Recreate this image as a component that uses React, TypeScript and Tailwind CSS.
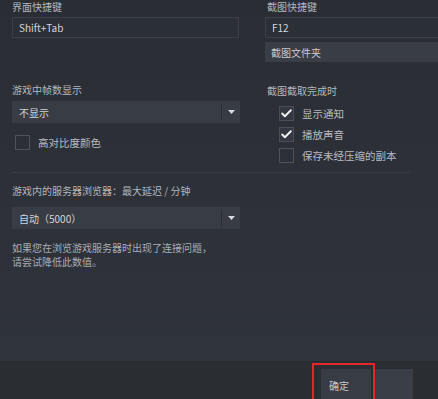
import {Check} from "lucide-react";

const font = {fontFamily: '"Noto Sans CJK SC", "Liberation Sans", sans-serif'};

const Label = ({children, className = ''}: {children: React.ReactNode; className?: string}) => (
    <div className={`text-[10px] leading-[14px] text-[#b3b7be] ${className}`}>{children}</div>
);

const Field = ({children, className = ''}: {children: React.ReactNode; className?: string}) => (
    <div className={`h-[21px] flex items-center px-[6px] text-[10px] text-[#d4d6da] bg-[#2b2f36] border border-[#3b3f47] ${className}`}>
        {children}
    </div>
);

const DropDown = ({value, className = ''}: {value: string; className?: string}) => (
    <div className={`h-[22px] w-[228px] flex items-stretch bg-[#383c44] text-[10px] text-[#d4d6da] ${className}`}>
        <div className="flex-1 flex items-center px-[7px]">{value}</div>
        <div className="w-[1px] my-[3px] bg-[#2a2d33]"/>
        <div className="w-[18px] flex items-center justify-center">
            <svg width="7" height="4" viewBox="0 0 7 4"><path d="M0 0h7L3.5 4z" fill="#d8dadd"/></svg>
        </div>
    </div>
);

const CheckBox = ({checked, label}: {checked?: boolean; label: string}) => (
    <div className="flex items-center h-[15px]">
        <div className={`w-[15px] h-[15px] flex items-center justify-center border ${checked ? 'bg-[#33373f] border-[#4a4e56]' : 'border-[#4e525a]'}`}>
            {checked && <Check size={13} strokeWidth={3.5} color="#f2f2f2"/>}
        </div>
        <span className="ml-[8px] text-[10.5px] text-[#b8bcc2]">{label}</span>
    </div>
);

export default function App() {
    return (
        <div style={font} className="relative w-[438px] h-[399px] overflow-hidden flex flex-col bg-gradient-to-b from-[#2a2d34] to-[#30343c]">
            <div className="flex-1 pl-[12px] pt-0">
                {/* shortcut keys */}
                <div className="flex">
                    <div className="w-[227px]">
                        <Label>界面快捷键</Label>
                        <Field className="mt-[3px]">Shift+Tab</Field>
                    </div>
                    <div className="flex-1 ml-[26px]">
                        <Label className="pl-[2px]">截图快捷键</Label>
                        <Field className="mt-[3px] border-r-0">F12</Field>
                        <div className="mt-[4px] h-[20px] flex items-center px-[6px] text-[10px] text-[#c8cbd0] bg-[#393d45]">截图文件夹</div>
                    </div>
                </div>

                {/* fps + screenshot done */}
                <div className="flex mt-[21px]">
                    <div className="w-[227px]">
                        <Label>游戏中帧数显示</Label>
                        <DropDown value="不显示" className="mt-[4px]"/>
                        <div className="mt-[12px] pl-[3px]">
                            <CheckBox label="高对比度颜色"/>
                        </div>
                    </div>
                    <div className="flex-1 ml-[26px]">
                        <Label className="pl-[2px] mt-[1px]">截图截取完成时</Label>
                        <div className="pl-[14px] mt-[8px] flex flex-col gap-[6px]">
                            <CheckBox checked label="显示通知"/>
                            <CheckBox checked label="播放声音"/>
                            <CheckBox label="保存未经压缩的副本"/>
                        </div>
                    </div>
                </div>

                <div className="mt-[9px] w-[398px] h-[1px] bg-[#3a3e46]"/>

                {/* server browser */}
                <Label className="mt-[11px] text-[10.5px]">游戏内的服务器浏览器：最大延迟 / 分钟</Label>
                <DropDown value="自动（5000）" className="mt-[9px]"/>
                <div className="mt-[12px] text-[10px] leading-[14px] text-[#a9adb4]">
                    <p>如果您在浏览游戏服务器时出现了连接问题，</p>
                    <p>请尝试降低此数值。</p>
                </div>
            </div>

            {/* footer */}
            <div className="h-[38px] shrink-0 bg-[#2a2d32] border-t border-[#262a2f] flex justify-end items-start pt-[7px] pr-[25px]">
                <div className="w-[50px] h-[32px] flex items-center pl-[8px] bg-[#383c44] text-[10px] text-[#c9ccd1]">确定</div>
                <div className="w-[40px] h-[32px] ml-[2px] bg-[#3a3e46]"/>
            </div>

            {/* red highlight */}
            <div className="absolute left-[312px] top-[363px] w-[63px] h-[40px] border-2 border-[#e3262c]"/>
        </div>
    );
}
